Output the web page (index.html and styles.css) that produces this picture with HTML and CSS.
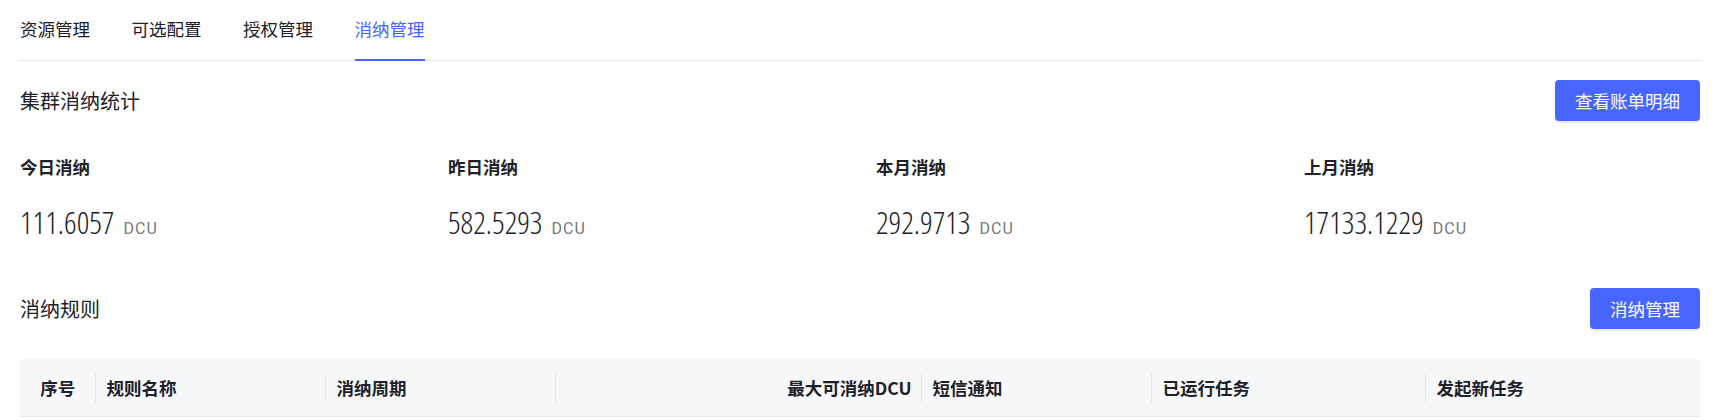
FILE: index.html
```html
<!DOCTYPE html>
<html lang="zh-CN">
<head>
    <meta charset="UTF-8">
    <meta name="viewport" content="width=device-width, initial-scale=1.0">
    <title>消纳管理</title>
    <link rel="stylesheet" href="styles.css">
</head>
<body>
    <div class="page">
        <div class="tabs">
            <div class="tab">资源管理</div>
            <div class="tab">可选配置</div>
            <div class="tab">授权管理</div>
            <div class="tab active">消纳管理</div>
        </div>

        <div class="section-head first">
            <h2>集群消纳统计</h2>
            <button type="button" class="btn">查看账单明细</button>
        </div>

        <div class="stats">
            <div class="stat">
                <div class="stat-label">今日消纳</div>
                <div class="stat-value"><span class="num">111.6057</span><span class="unit">DCU</span></div>
            </div>
            <div class="stat">
                <div class="stat-label">昨日消纳</div>
                <div class="stat-value"><span class="num">582.5293</span><span class="unit">DCU</span></div>
            </div>
            <div class="stat">
                <div class="stat-label">本月消纳</div>
                <div class="stat-value"><span class="num">292.9713</span><span class="unit">DCU</span></div>
            </div>
            <div class="stat">
                <div class="stat-label">上月消纳</div>
                <div class="stat-value"><span class="num">17133.1229</span><span class="unit">DCU</span></div>
            </div>
        </div>

        <div class="section-head second">
            <h2>消纳规则</h2>
            <button type="button" class="btn">消纳管理</button>
        </div>

        <table class="rules">
            <colgroup>
                <col class="c-index">
                <col class="c-name">
                <col class="c-cycle">
                <col class="c-max">
                <col class="c-sms">
                <col class="c-run">
                <col class="c-new">
            </colgroup>
            <thead>
                <tr>
                    <th class="center">序号</th>
                    <th>规则名称</th>
                    <th>消纳周期</th>
                    <th class="right">最大可消纳DCU</th>
                    <th>短信通知</th>
                    <th>已运行任务</th>
                    <th class="last">发起新任务</th>
                </tr>
            </thead>
        </table>
    </div>
</body>
</html>
```

FILE: styles.css
```css
body {
    margin: 0;
    padding: 0;
    background-color: #ffffff;
    color: #1d2129;
    font-family: "Noto Sans CJK SC", "Noto Sans", sans-serif;
    font-size: 17.5px;
}
.page {
    padding: 0 12px 0 20px;
}
.tabs {
    display: flex;
    gap: 41.5px;
    height: 60px;
    border-bottom: 1px solid #e5e8ef;
}
.tab {
    box-sizing: border-box;
    height: 61px;
    margin-bottom: -1px;
    padding-bottom: 3px;
    display: flex;
    align-items: center;
    border-bottom: 2px solid transparent;
    color: #1d2129;
    cursor: pointer;
}
.tab.active {
    color: #4766ff;
    border-bottom-color: #4766ff;
}
.section-head {
    display: flex;
    justify-content: space-between;
    align-items: center;
}
.section-head.first {
    margin-top: 19px;
}
.section-head.second {
    margin-top: 49px;
}
.section-head h2 {
    margin: 0;
    font-size: 20px;
    font-weight: 400;
    line-height: 28px;
}
.btn {
    height: 41px;
    padding: 0 20px;
    border: none;
    border-radius: 4px;
    background-color: #4766ff;
    color: #ffffff;
    font-family: inherit;
    font-size: 17.5px;
    box-shadow: 0 2px 0 rgba(71, 102, 255, 0.12);
    cursor: pointer;
}
.stats {
    display: grid;
    grid-template-columns: repeat(4, 1fr);
    column-gap: 32px;
    margin-top: 34px;
}
.stat-label {
    font-weight: 700;
    line-height: 24px;
}
.stat-value {
    display: flex;
    align-items: baseline;
    margin-top: 26px;
    height: 34px;
}
.num {
    font-family: "Open Sans", sans-serif;
    font-stretch: 75%;
    font-size: 31px;
    font-weight: 300;
    line-height: 34px;
    color: #1d2129;
}
.unit {
    margin-left: 9px;
    font-family: Roboto, "Liberation Sans", sans-serif;
    font-size: 16px;
    letter-spacing: 1px;
    line-height: 1;
    color: #787878;
}
.rules {
    width: 100%;
    margin-top: 30px;
    border-collapse: collapse;
    table-layout: fixed;
}
.c-index { width: 75.5px; }
.c-name { width: 230px; }
.c-cycle { width: 230px; }
.c-max { width: 366px; }
.c-sms { width: 230px; }
.c-run { width: 274px; }
.rules th {
    position: relative;
    height: 57px;
    padding: 0 10px 0 11px;
    background-color: #f7f8fa;
    border-bottom: 1px solid #e5e8ef;
    text-align: left;
    font-weight: 700;
    white-space: nowrap;
}
.rules th::after {
    content: "";
    position: absolute;
    right: 0;
    top: 50%;
    width: 1px;
    height: 28px;
    margin-top: -14px;
    background-color: #e5e6eb;
}
.rules th.last::after {
    display: none;
}
.rules th.center {
    text-align: center;
    padding: 0;
}
.rules th.right {
    text-align: right;
}
```
